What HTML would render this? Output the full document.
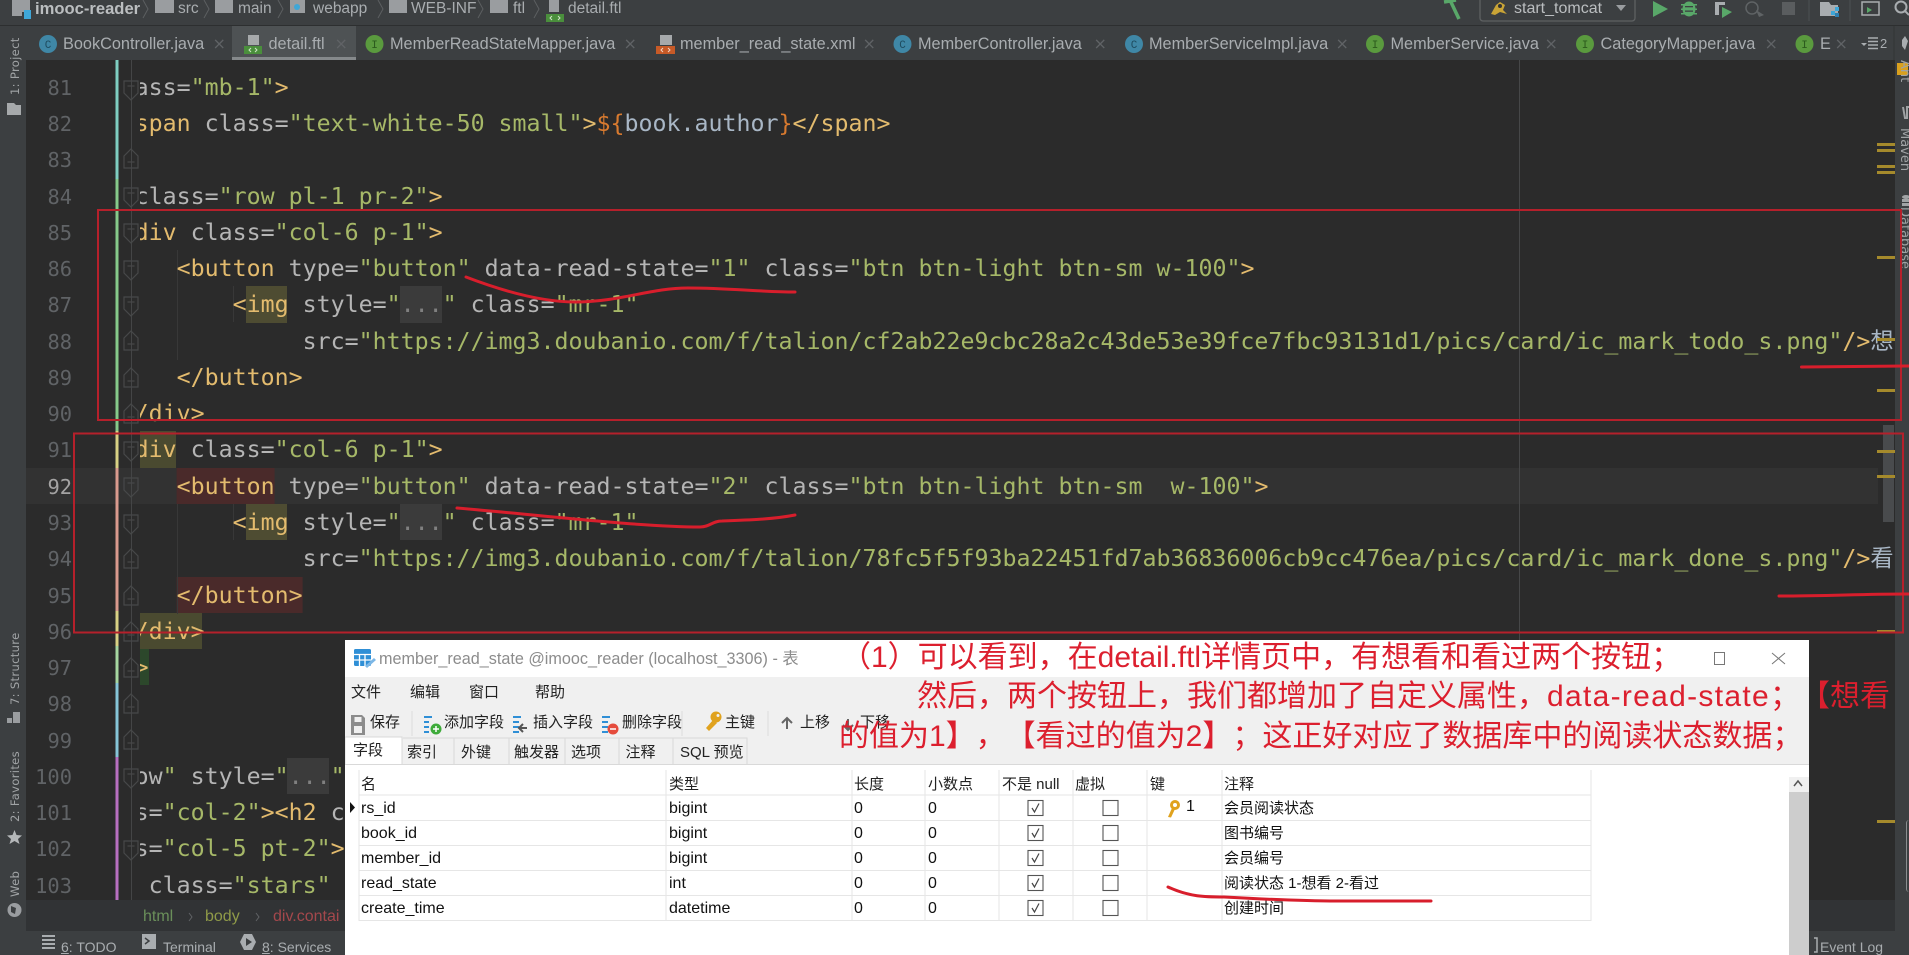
<!DOCTYPE html>
<html lang="zh"><head><meta charset="utf-8"><title>detail.ftl</title>
<style>
html,body{margin:0;padding:0;background:#2b2b2b}
#p{position:relative;width:1909px;height:955px;overflow:hidden;background:#2b2b2b;font-family:"Liberation Sans","Noto Sans CJK SC",sans-serif}
.a{position:absolute;white-space:nowrap}
.c{position:absolute;left:139.5px;top:61px;width:1757px;height:839px;overflow:hidden}
.l{position:absolute;left:-18.9px;height:36.26px;line-height:36.26px;white-space:pre;font-family:"DejaVu Sans Mono","Noto Sans CJK SC",monospace;font-size:23.25px;color:#b5b5b5}
.t{color:#e3bb6e}.v{color:#a6b868}.o{color:#d87a2f}.b{color:#a9b7c6}.g{color:#808080}
.n{position:absolute;right:1837px;height:36.26px;line-height:36.26px;font-family:"DejaVu Sans Mono",monospace;font-size:20.4px;color:#606366}
.tab{position:absolute;top:33px;height:22px;line-height:22px;font-size:16.3px;color:#a9adb0;white-space:nowrap}
.x{position:absolute;top:33px;font-size:16px;line-height:22px;color:#606366;font-family:"DejaVu Sans",sans-serif}
.bc{position:absolute;top:0;height:17px;line-height:17px;font-size:15.5px;color:#a9adb0;white-space:nowrap}
.vl{position:absolute;writing-mode:vertical-rl;transform:rotate(180deg);font-family:"DejaVu Sans",sans-serif;font-size:11.6px;color:#a0a3a5;white-space:nowrap;letter-spacing:.3px}
.vr{position:absolute;writing-mode:vertical-rl;font-family:"DejaVu Sans",sans-serif;font-size:13px;color:#a0a3a5;white-space:nowrap}
.sb{position:absolute;top:937px;font-size:14px;line-height:20px;color:#a9adb0;white-space:nowrap}
.d{position:absolute;white-space:nowrap;color:#222;font-size:15px;line-height:20px}
.r{position:absolute;white-space:nowrap;color:#111;font-size:16px;line-height:22px}
.h{position:absolute;white-space:nowrap;color:#222;font-size:15px;line-height:22px;top:774px}
.m{position:absolute;left:1877px;width:18px;height:3px;background:#a58a2c}
.rd{position:absolute;white-space:nowrap;color:#dc1f2e;font-size:30px;line-height:40px;text-spacing-trim:space-all}
</style></head><body><div id="p">

<!-- chrome backgrounds -->
<div class="a" style="left:0;top:0;width:1909px;height:60px;background:#3c3f41"></div>
<div class="a" style="left:0;top:25px;width:1909px;height:1px;background:#2d2f30"></div>
<div class="a" style="left:0;top:60px;width:26px;height:895px;background:#3c3f41"></div>
<div class="a" style="left:1895px;top:60px;width:14px;height:895px;background:#3c3f41"></div>
<div class="a" style="left:26px;top:900px;width:1869px;height:31px;background:#313335"></div>
<div class="a" style="left:0;top:931px;width:1909px;height:24px;background:#3c3f41"></div>
<div class="a" style="left:232px;top:26px;width:124px;height:34px;background:#4e5254"></div>
<div class="a" style="left:232px;top:57px;width:124px;height:3px;background:#85898b"></div>

<!-- editor graphics beneath the text -->
<svg class="a" style="left:0;top:0" width="1909" height="955">
<defs>
<g id="fd"><path d="M-7 -9H7V3L0 10L-7 3Z" fill="none" stroke="#474849" stroke-width="1.2"/><path d="M-3.500 -4H3.500" stroke="#474849" stroke-width="1.200"/></g>
<g id="fu"><path d="M-7 9H7V-3L0 -10L-7 -3Z" fill="none" stroke="#474849" stroke-width="1.2"/><path d="M-3.500 3H3.500" stroke="#474849" stroke-width="1.200"/></g>
</defs>
<rect x="26" y="468" width="1852" height="36" fill="#323232"/>
<rect x="140" y="431" width="36" height="37" fill="#4a4a30"/>
<rect x="176.600" y="468" width="98" height="36" fill="#4a2a2a"/>
<rect x="176.600" y="577" width="126" height="36" fill="#4a2a2a"/>
<rect x="140" y="613" width="62" height="36" fill="#4a4a30"/>
<rect x="140" y="649" width="9" height="36" fill="#2c472b"/>
<rect x="246" y="286" width="41" height="37" fill="#4e4c32"/>
<rect x="246" y="504" width="41" height="36" fill="#4e4c32"/>
<rect x="400" y="286" width="42" height="37" fill="#3b3b3b"/>
<rect x="400" y="504" width="42" height="36" fill="#3b3b3b"/>
<rect x="287" y="758" width="42" height="36" fill="#3b3b3b"/>
<path d="M1519.500 60V900" stroke="#464748" stroke-width="1"/>
<path d="M131.500 60V900" stroke="#444546" stroke-width="1"/>
<path d="M177.500 250V360M233.500 286V322M177.500 504V614M233.500 504V540" stroke="#383838" stroke-width="1"/>
<rect x="115.500" y="60" width="3" height="119" fill="#7ecdc0"/>
<rect x="115.500" y="179" width="3" height="252" fill="#86c98a"/>
<rect x="115.500" y="431" width="3" height="37" fill="#d8d184"/>
<rect x="115.500" y="468" width="3" height="143" fill="#d99a8e"/>
<rect x="115.500" y="611" width="3" height="35" fill="#d8d184"/>
<rect x="115.500" y="646" width="3" height="37" fill="#a6d6a0"/>
<rect x="115.500" y="683" width="3" height="74" fill="#86c5d8"/>
<rect x="115.500" y="757" width="3" height="143" fill="#b76fc0"/>
<use href="#fd" x="131" y="90"/><use href="#fu" x="131" y="159"/><use href="#fd" x="131" y="197"/><use href="#fd" x="131" y="233"/>
<use href="#fd" x="131" y="270"/><use href="#fd" x="131" y="306"/><use href="#fu" x="131" y="341"/><use href="#fu" x="131" y="378"/>
<use href="#fu" x="131" y="414"/><use href="#fd" x="131" y="451"/><use href="#fd" x="131" y="487"/><use href="#fd" x="131" y="524"/>
<use href="#fu" x="131" y="559"/><use href="#fu" x="131" y="596"/><use href="#fu" x="131" y="632"/><use href="#fu" x="131" y="668"/>
<use href="#fu" x="131" y="704"/><use href="#fu" x="131" y="740"/><use href="#fd" x="131" y="778"/><use href="#fd" x="131" y="850"/>
</svg>

<!-- line numbers -->
<div class="n" style="top:69.87px">81</div><div class="n" style="top:106.13px">82</div><div class="n" style="top:142.39px">83</div><div class="n" style="top:178.65px">84</div><div class="n" style="top:214.91px">85</div><div class="n" style="top:251.17px">86</div><div class="n" style="top:287.43px">87</div><div class="n" style="top:323.69px">88</div><div class="n" style="top:359.95px">89</div><div class="n" style="top:396.21px">90</div><div class="n" style="top:432.47px">91</div><div class="n" style="top:468.73px;color:#a4a3a3">92</div><div class="n" style="top:504.99px">93</div><div class="n" style="top:541.25px">94</div><div class="n" style="top:577.51px">95</div><div class="n" style="top:613.77px">96</div><div class="n" style="top:650.03px">97</div><div class="n" style="top:686.29px">98</div><div class="n" style="top:722.55px">99</div><div class="n" style="top:758.81px">100</div><div class="n" style="top:795.07px">101</div><div class="n" style="top:831.33px">102</div><div class="n" style="top:867.59px">103</div>

<!-- code -->
<div class="c">
<div class="l" style="top:8.87px">lass=<span class="v">"mb-1"</span><span class="t">&gt;</span></div>
<div class="l" style="top:45.13px"><span class="t">&lt;span</span> class=<span class="v">"text-white-50 small"</span><span class="t">&gt;</span><span class="o">${</span><span class="b">book.author</span><span class="o">}</span><span class="t">&lt;/span&gt;</span></div>
<div class="l" style="top:117.65px"> class=<span class="v">"row pl-1 pr-2"</span><span class="t">&gt;</span></div>
<div class="l" style="top:153.91px"><span class="t">&lt;div</span> class=<span class="v">"col-6 p-1"</span><span class="t">&gt;</span></div>
<div class="l" style="top:190.17px">    <span class="t">&lt;button</span> type=<span class="v">"button"</span> data-read-state=<span class="v">"1"</span> class=<span class="v">"btn btn-light btn-sm w-100"</span><span class="t">&gt;</span></div>
<div class="l" style="top:226.43px">        <span class="t">&lt;img</span> style=<span class="v">"</span><span class="g">...</span><span class="v">"</span> class=<span class="v">"mr-1"</span></div>
<div class="l" style="top:262.69px">             src=<span class="v">"https://img3.doubanio.com/f/talion/cf2ab22e9cbc28a2c43de53e39fce7fbc93131d1/pics/card/ic_mark_todo_s.png"</span><span class="t">/&gt;</span><span style="color:#a9b7c6">想</span></div>
<div class="l" style="top:298.95px">    <span class="t">&lt;/button&gt;</span></div>
<div class="l" style="top:335.21px"><span class="t">&lt;/div&gt;</span></div>
<div class="l" style="top:371.47px"><span class="t">&lt;div</span> class=<span class="v">"col-6 p-1"</span><span class="t">&gt;</span></div>
<div class="l" style="top:407.73px">    <span class="t">&lt;button</span> type=<span class="v">"button"</span> data-read-state=<span class="v">"2"</span> class=<span class="v">"btn btn-light btn-sm  w-100"</span><span class="t">&gt;</span></div>
<div class="l" style="top:443.99px">        <span class="t">&lt;img</span> style=<span class="v">"</span><span class="g">...</span><span class="v">"</span> class=<span class="v">"mr-1"</span></div>
<div class="l" style="top:480.25px">             src=<span class="v">"https://img3.doubanio.com/f/talion/78fc5f5f93ba22451fd7ab36836006cb9cc476ea/pics/card/ic_mark_done_s.png"</span><span class="t">/&gt;</span><span style="color:#a9b7c6">看</span></div>
<div class="l" style="top:516.51px">    <span class="t">&lt;/button&gt;</span></div>
<div class="l" style="top:552.77px"><span class="t">&lt;/div&gt;</span></div>
<div class="l" style="top:589.03px"> <span class="t">&gt;</span></div>
<div class="l" style="top:697.81px">row<span class="v">"</span> style=<span class="v">"</span><span class="g">...</span><span class="v">"</span></div>
<div class="l" style="top:734.07px">ss=<span class="v">"col-2"</span><span class="t">&gt;&lt;h2</span> class=</div>
<div class="l" style="top:770.33px">ss=<span class="v">"col-5 pt-2"</span><span class="t">&gt;</span></div>
<div class="l" style="top:806.59px">  class=<span class="v">"stars"</span> style</div>
</div>

<!-- scrollbar marks -->
<div class="a" style="left:1882.500px;top:425px;width:11px;height:97px;background:#494b4d"></div>
<div class="a" style="left:1897px;top:63px;width:11px;height:12px;background:#d9a01e"></div>
<div class="m" style="top:143px"></div><div class="m" style="top:149px"></div><div class="m" style="top:165px"></div><div class="m" style="top:171px"></div>
<div class="m" style="top:256px"></div><div class="m" style="top:338px"></div><div class="m" style="top:389px"></div><div class="m" style="top:450px"></div><div class="m" style="top:475px"></div><div class="m" style="top:630px"></div><div class="m" style="top:820px"></div>

<!-- top breadcrumb -->
<svg class="a" style="left:0;top:0" width="1909" height="60">
<path d="M12 0H30V12H22V16H12Z" fill="#9a9da0"/><rect x="24" y="10" width="7" height="9" fill="#3fa7d8"/>
<g fill="#9a9da0"><path d="M155 0H174V13H155Z"/><path d="M215 0H233V13H215Z"/><path d="M290 0H305V13H290Z"/><path d="M389 0H407V13H389Z"/><path d="M490 0H508V13H490Z"/></g>
<circle cx="297" cy="7" r="3" fill="#3fa7d8"/>
<g fill="none" stroke="#5c5f61" stroke-width="1"><path d="M143 0L148 9L143 18M204 0L209 9L204 18M278 0L283 9L278 18M378 0L383 9L378 18M478 0L483 9L478 18M534 0L539 9L534 18"/></g>
<rect x="549" y="0" width="10" height="12" fill="#9a9da0"/><rect x="546" y="14" width="18" height="8" fill="#4a8f3c"/>
<path d="M552 16L550 18L552 20M558 16L560 18L558 20" stroke="#cfe6c8" fill="none" stroke-width="1"/>

<!-- tab icons -->
<g font-family="Liberation Mono,monospace" font-size="11" text-anchor="middle">
<circle cx="48" cy="44" r="9" fill="#3f87a6"/><text x="48" y="48" fill="#1f4c60">C</text>
<circle cx="374.500" cy="44" r="9" fill="#5a9a3e"/><text x="374.500" y="48" fill="#2b5a1d">I</text>
<circle cx="902.500" cy="44" r="9" fill="#3f87a6"/><text x="902.500" y="48" fill="#1f4c60">C</text>
<circle cx="1134" cy="44" r="9" fill="#3f87a6"/><text x="1134" y="48" fill="#1f4c60">C</text>
<circle cx="1375" cy="44" r="9" fill="#5a9a3e"/><text x="1375" y="48" fill="#2b5a1d">I</text>
<circle cx="1585" cy="44" r="9" fill="#5a9a3e"/><text x="1585" y="48" fill="#2b5a1d">I</text>
<circle cx="1804.500" cy="44" r="9" fill="#5a9a3e"/><text x="1804.500" y="48" fill="#2b5a1d">I</text>
</g>
<rect x="248" y="35" width="11" height="10" fill="#a6a9ab"/><rect x="244" y="46" width="18" height="8" fill="#4a8f3c"/>
<path d="M251 48L249 50L251 52M255 48L257 50L255 52" stroke="#cfe6c8" fill="none"/>
<rect x="660" y="35" width="12" height="10" fill="#a6a9ab"/><rect x="656" y="46" width="19" height="8" fill="#c75a27"/>
<path d="M663 48L661 50L663 52M668 48L670 50L668 52" stroke="#f3d5c4" fill="none"/>

<!-- toolbar right -->
<path d="M1444 2L1456 0M1450 0L1459 19" stroke="#59a869" stroke-width="3.500" fill="none"/>
<rect x="1480" y="-4" width="155" height="25" rx="3" fill="none" stroke="#5e6162" stroke-width="1.300"/>
<path d="M1491 14L1496 5L1500 2L1505 5L1503 10L1507 14L1500 12L1495 15Z" fill="#c9a436"/><circle cx="1500" cy="6" r="2" fill="#333"/>
<path d="M1616 5H1626L1621 11Z" fill="#9a9da0"/>
<path d="M1653 1L1668 9L1653 17Z" fill="#59a869"/>
<g fill="#59a869"><ellipse cx="1689" cy="9" rx="6.500" ry="7.500"/><rect x="1681" y="4" width="16" height="1.500"/><rect x="1681" y="8.500" width="16" height="1.500"/><rect x="1681" y="13" width="16" height="1.500"/></g>
<rect x="1685" y="6" width="8" height="1.300" fill="#3c3f41"/><rect x="1685" y="10.500" width="8" height="1.300" fill="#3c3f41"/>
<path d="M1715 2H1725V5H1719V15H1715Z" fill="#a9adb0"/><path d="M1722 7L1732 12L1722 18Z" fill="#59a869"/>
<circle cx="1752" cy="8" r="6" fill="none" stroke="#5f6365" stroke-width="1.500"/><path d="M1756 10L1764 15L1759 17Z" fill="#5f6365"/>
<rect x="1782" y="2" width="13" height="13" fill="#5a5d5f"/>
<path d="M1809 0V21M1850 0V21" stroke="#4d5052"/>
<path d="M1820 2H1829L1831 5H1838V16H1820Z" fill="#a9adb0"/><rect x="1831" y="11" width="4" height="4" fill="#3fa7d8"/><rect x="1835" y="7" width="4" height="4" fill="#3fa7d8"/><rect x="1835" y="13" width="4" height="4" fill="#2d7fb0"/>
<rect x="1862" y="2" width="17" height="13" fill="none" stroke="#a9adb0" stroke-width="1.500"/><path d="M1867 7L1872 10L1867 13Z" fill="#59a869"/>
<circle cx="1901" cy="7" r="5.500" fill="none" stroke="#a9adb0" stroke-width="2"/><path d="M1905 11L1909 15" stroke="#a9adb0" stroke-width="2"/>
<path d="M1861 43H1867L1864 46Z" fill="#a9adb0"/><path d="M1868 38H1878M1868 41.500H1878M1868 45H1878M1868 48.500H1878" stroke="#a9adb0" stroke-width="1.500"/>
<path d="M1902 40L1905 36L1908 41L1905 50L1902 46Z" fill="#a9adb0"/>
<path d="M1894 26V60" stroke="#323435"/>
</svg>

<div class="bc" style="left:35px;font-weight:bold;color:#bbbec0;font-size:16.6px">imooc-reader</div>
<div class="bc" style="left:178px">src</div><div class="bc" style="left:238px">main</div><div class="bc" style="left:313px">webapp</div><div class="bc" style="left:411px">WEB-INF</div><div class="bc" style="left:513px">ftl</div><div class="bc" style="left:568px">detail.ftl</div>
<div class="a" style="left:1514px;top:0;line-height:18px;font-size:16px;color:#bbbec0">start_tomcat</div>

<!-- tabs -->
<div class="tab" style="left:63px">BookController.java</div><div class="x" style="left:212.500px">×</div>
<div class="tab" style="left:268.500px">detail.ftl</div><div class="x" style="left:334.500px">×</div>
<div class="tab" style="left:390px">MemberReadStateMapper.java</div><div class="x" style="left:623.500px">×</div>
<div class="tab" style="left:680px">member_read_state.xml</div><div class="x" style="left:862.500px">×</div>
<div class="tab" style="left:918px">MemberController.java</div><div class="x" style="left:1093.500px">×</div>
<div class="tab" style="left:1149px">MemberServiceImpl.java</div><div class="x" style="left:1335.500px">×</div>
<div class="tab" style="left:1390.500px">MemberService.java</div><div class="x" style="left:1544.500px">×</div>
<div class="tab" style="left:1600.500px">CategoryMapper.java</div><div class="x" style="left:1764.500px">×</div>
<div class="tab" style="left:1820px">E</div><div class="x" style="left:1834.500px">×</div>
<div class="tab" style="left:1880px;font-size:13px">2</div>

<!-- left tool strip -->
<div class="vl" style="left:8px;top:35px;height:60px">1: Project</div>
<div class="vl" style="left:8px;top:632px;height:73px">7: Structure</div>
<div class="vl" style="left:8px;top:753px;height:69px">2: Favorites</div>
<div class="vl" style="left:8px;top:870px;height:27px">Web</div>
<svg class="a" style="left:0;top:0" width="26" height="955">
<path d="M7 103H14L16 105H21V115H7Z" fill="#a6a9ab"/>
<path d="M7 718H12V723H7ZM13 712H20V723H13Z" fill="#9a9da0"/>
<path d="M14.500 830L16.500 835L22 835.500L18 839L19.500 844L14.500 841L9.500 844L11 839L7 835.500L12.500 835Z" fill="#b4b7b9"/>
<circle cx="14.500" cy="910" r="7" fill="#9a9da0"/><path d="M11 906L16 908L15 914L11 912Z" fill="#3c3f41"/>
</svg>

<!-- right tool strip -->
<div class="vr" style="left:1897px;top:60px">Ant</div>
<div class="vr" style="left:1897px;top:128px">Maven</div>
<div class="vr" style="left:1897px;top:207px">Database</div>
<svg class="a" style="left:1895px;top:100px" width="14" height="110">
<path d="M8 7L10 18H12L12 7H14" fill="none" stroke="#a0a3a5" stroke-width="2"/>
<ellipse cx="11" cy="97" rx="4" ry="2" fill="#a0a3a5"/><rect x="7" y="99" width="8" height="3" fill="#a0a3a5"/><rect x="7" y="103" width="8" height="3" fill="#a0a3a5"/>
</svg>

<!-- lower breadcrumb -->
<div class="a" style="left:143px;top:906px;font-size:16px;line-height:22px;color:#6a8f5a">html</div>
<div class="a" style="left:205px;top:906px;font-size:16px;line-height:22px;color:#8f9a48">body</div>
<div class="a" style="left:273px;top:906px;font-size:16px;line-height:22px;color:#a4484c">div.contai</div>
<svg class="a" style="left:0;top:900px" width="300" height="31"><path d="M189 13L192 17L189 21M256 13L259 17L256 21" stroke="#606366" fill="none"/></svg>

<!-- status bar -->
<svg class="a" style="left:0;top:931px" width="300" height="24">
<path d="M42 5H55M42 9H55M42 13H55M42 17H55" stroke="#a9adb0" stroke-width="2"/>
<rect x="142" y="3" width="14" height="15" fill="#a9adb0"/><path d="M145 7L149 10L145 13" stroke="#3c3f41" fill="none" stroke-width="1.500"/>
<path d="M244 3H252L256 11L252 19H244L240 11Z" fill="#a9adb0"/><path d="M246 7L252 11L246 15Z" fill="#3c3f41"/>
</svg>
<div class="sb" style="left:61px"><u>6</u>: TODO</div><div class="sb" style="left:163px">Terminal</div><div class="sb" style="left:262px"><u>8</u>: Services</div>
<div class="sb" style="left:1820px">Event Log</div>
<svg class="a" style="left:1805px;top:935px" width="14" height="20"><path d="M9 3H12V17H9" stroke="#a9adb0" fill="none" stroke-width="1.500"/></svg>
<div class="a" style="left:1906px;top:820px;width:3px;height:72px;border-left:1px solid #8a8d8f;border-radius:3px 0 0 3px"></div>

<!-- dialog -->
<div class="a" style="left:345px;top:640px;width:1464px;height:315px;background:#fff"></div>
<div class="a" style="left:345px;top:677px;width:1464px;height:87px;background:#f0f0f0"></div>
<div class="a" style="left:345px;top:764px;width:1464px;height:1px;background:#d9d9d9"></div>

<svg class="a" style="left:345px;top:640px" width="1464" height="315">
<!-- title icon -->
<rect x="9" y="9" width="17" height="17" rx="1.500" fill="#2f8fd6"/>
<path d="M9 14.500H26M9 20H26M14.500 14V26M20 14V26" stroke="#fff" stroke-width="1.300"/>
<path d="M20 26L29 18L31 20L22 28Z" fill="#7cb7e6"/>
<!-- toolbar icons -->
<path d="M6 75H17L20 78V95H6Z" fill="#8c8c8c"/><rect x="9.500" y="77" width="7" height="5" fill="#f0f0f0"/><rect x="9" y="86" width="8" height="7" fill="#f0f0f0"/>
<g fill="none" stroke-width="2"><path d="M79 77H87M79 82H84M79 87H84M79 92H84" stroke="#2f8fd6"/></g>
<circle cx="91" cy="89" r="5.500" fill="#3eab3a"/><path d="M88 89H94M91 86V92" stroke="#fff" stroke-width="1.500"/>
<path d="M168 77H176M168 82H174M168 87H174M168 92H174" stroke="#2f8fd6" stroke-width="2"/><path d="M182 88L175 88M178 84L174 88L178 92" stroke="#555" stroke-width="2" fill="none"/>
<path d="M257 77H265M257 82H263M257 87H263M257 92H263" stroke="#2f8fd6" stroke-width="2"/>
<circle cx="268" cy="89" r="5.500" fill="#e54b3c"/><path d="M265 89H271" stroke="#fff" stroke-width="1.500"/>
<circle cx="371" cy="77" r="5.500" fill="#e0a21e"/><circle cx="373" cy="75.500" r="1.500" fill="#f0f0f0"/><path d="M368 80L361 88L364 91L372 83Z" fill="#e0a21e"/>
<path d="M442 89V79M437 83L442 78L447 83" stroke="#666" stroke-width="2" fill="none"/>
<path d="M503 79V89M498 85L503 90L508 85" stroke="#666" stroke-width="2" fill="none"/>
<path d="M67 71V96M337 71V96M423 71V96" stroke="#dcdcdc"/>
<!-- tabs -->
<path d="M57 124V97H0V124" fill="#fff" stroke="#d9d9d9"/>
<path d="M58 98H402V124M109 98V124M164 98V124M220 98V124M274 98V124M328 98V124" fill="none" stroke="#d9d9d9"/>
<!-- table lines -->
<g stroke="#e6e6e6" stroke-width="1">
<path d="M14 155H1246M14 180.500H1246M14 205.500H1246M14 230.500H1246M14 255.500H1246M14 280.500H1246" />
<path d="M14 130V281M321 130V281M507 130V281M580 130V281M654 130V281M728 130V281M802 130V281M877 130V281M1246 130V281"/>
</g>
<path d="M5 162L10 167.500L5 173Z" fill="#111"/>
<!-- checkboxes -->
<g fill="#fff" stroke="#555" stroke-width="1.100">
<rect x="683" y="160.500" width="15" height="15"/><rect x="683" y="185.500" width="15" height="15"/><rect x="683" y="210.500" width="15" height="15"/><rect x="683" y="235.500" width="15" height="15"/><rect x="683" y="260.500" width="15" height="15"/>
<rect x="758" y="160.500" width="15" height="15"/><rect x="758" y="185.500" width="15" height="15"/><rect x="758" y="210.500" width="15" height="15"/><rect x="758" y="235.500" width="15" height="15"/><rect x="758" y="260.500" width="15" height="15"/>
</g>
<g fill="none" stroke="#444" stroke-width="1.200">
<path d="M687 168L689.500 172L694 163.500M687 193L689.500 197L694 188.500M687 218L689.500 222L694 213.500M687 243L689.500 247L694 238.500M687 268L689.500 272L694 263.500"/>
</g>
<circle cx="830" cy="165" r="3.500" fill="none" stroke="#e0a21e" stroke-width="3"/><path d="M827 168L823 177L826 177.500L830 169" fill="#e0a21e"/>
<!-- window controls -->
<rect x="1369.500" y="12.500" width="10" height="12" fill="none" stroke="#777" stroke-width="1"/>
<path d="M1427 13L1440 24M1440 13L1427 24" stroke="#777" stroke-width="1"/>
<!-- scrollbar -->
<rect x="1444" y="137" width="20" height="178" fill="#f0f0f0"/><rect x="1444" y="152" width="20" height="163" fill="#cdcdcd"/>
<path d="M1449 146L1453 141L1457 146" fill="none" stroke="#555" stroke-width="1.500"/>
</svg>

<div class="a" style="left:379px;top:648px;font-size:16.2px;line-height:22px;color:#8c8c8c">member_read_state @imooc_reader (localhost_3306) - 表</div>
<div class="d" style="left:351px;top:683px">文件</div><div class="d" style="left:410px;top:683px">编辑</div><div class="d" style="left:469px;top:683px">窗口</div><div class="d" style="left:535px;top:683px">帮助</div>
<div class="d" style="left:370px;top:713px">保存</div><div class="d" style="left:444px;top:713px">添加字段</div><div class="d" style="left:533px;top:713px">插入字段</div><div class="d" style="left:622px;top:713px">删除字段</div><div class="d" style="left:725px;top:713px">主键</div><div class="d" style="left:800px;top:713px">上移</div><div class="d" style="left:860px;top:713px">下移</div>
<div class="d" style="left:353px;top:741px">字段</div><div class="d" style="left:407px;top:743px">索引</div><div class="d" style="left:461px;top:743px">外键</div><div class="d" style="left:514px;top:743px">触发器</div><div class="d" style="left:571px;top:743px">选项</div><div class="d" style="left:625.500px;top:743px">注释</div><div class="d" style="left:680px;top:743px">SQL 预览</div>

<div class="h" style="left:361px">名</div><div class="h" style="left:669px">类型</div><div class="h" style="left:854px">长度</div><div class="h" style="left:928px">小数点</div><div class="h" style="left:1002px">不是 null</div><div class="h" style="left:1075px">虚拟</div><div class="h" style="left:1150px">键</div><div class="h" style="left:1224px">注释</div>

<div class="r" style="left:361px;top:798px">rs_id</div><div class="r" style="left:669px;top:798px">bigint</div><div class="r" style="left:854px;top:798px">0</div><div class="r" style="left:928px;top:798px">0</div><div class="r" style="left:1186px;top:796px">1</div><div class="r" style="left:1224px;top:798px;font-size:15px">会员阅读状态</div>
<div class="r" style="left:361px;top:823px">book_id</div><div class="r" style="left:669px;top:823px">bigint</div><div class="r" style="left:854px;top:823px">0</div><div class="r" style="left:928px;top:823px">0</div><div class="r" style="left:1224px;top:823px;font-size:15px">图书编号</div>
<div class="r" style="left:361px;top:848px">member_id</div><div class="r" style="left:669px;top:848px">bigint</div><div class="r" style="left:854px;top:848px">0</div><div class="r" style="left:928px;top:848px">0</div><div class="r" style="left:1224px;top:848px;font-size:15px">会员编号</div>
<div class="r" style="left:361px;top:873px">read_state</div><div class="r" style="left:669px;top:873px">int</div><div class="r" style="left:854px;top:873px">0</div><div class="r" style="left:928px;top:873px">0</div><div class="r" style="left:1224px;top:873px;font-size:15px">阅读状态 1-想看 2-看过</div>
<div class="r" style="left:361px;top:898px">create_time</div><div class="r" style="left:669px;top:898px">datetime</div><div class="r" style="left:854px;top:898px">0</div><div class="r" style="left:928px;top:898px">0</div><div class="r" style="left:1224px;top:898px;font-size:15px">创建时间</div>

<!-- red annotation text -->
<div class="rd" style="left:841px;top:638px">（1）可以看到，在detail.ftl详情页中，有想看和看过两个按钮；</div>
<div class="rd" style="left:917px;top:677px">然后，两个按钮上，我们都增加了自定义属性，<span style="letter-spacing:1.3px">data-read-state</span>；【想看</div>
<div class="rd" style="left:839px;top:717px">的值为1】，【看过的值为2】；这正好对应了数据库中的阅读状态数据；</div>

<!-- red annotations -->
<svg class="a" style="left:0;top:0" width="1909" height="955">
<g fill="none" stroke="#b5202b" stroke-width="2">
<rect x="98" y="210" width="1803" height="210"/>
<rect x="74" y="433.500" width="1829" height="199"/>
</g>
<g fill="none" stroke="#d81e2c" stroke-width="3" stroke-linecap="round">
<path d="M466 277C500 290 540 302 575 302C620 302 650 288 688 288C730 288 760 292 795 292"/>
<path d="M457 508C540 515 640 527 700 527C710 527 712 521 722 521C750 520 775 519 795 515"/>
<path d="M1801.500 367L1909 366"/>
<path d="M1779 596C1830 596 1860 594 1909 594"/>
<path d="M1168 887C1190 897 1205 897 1224 897C1260 899 1300 901 1337 901L1431 901"/>
</g>
</svg>
</div></body></html>
